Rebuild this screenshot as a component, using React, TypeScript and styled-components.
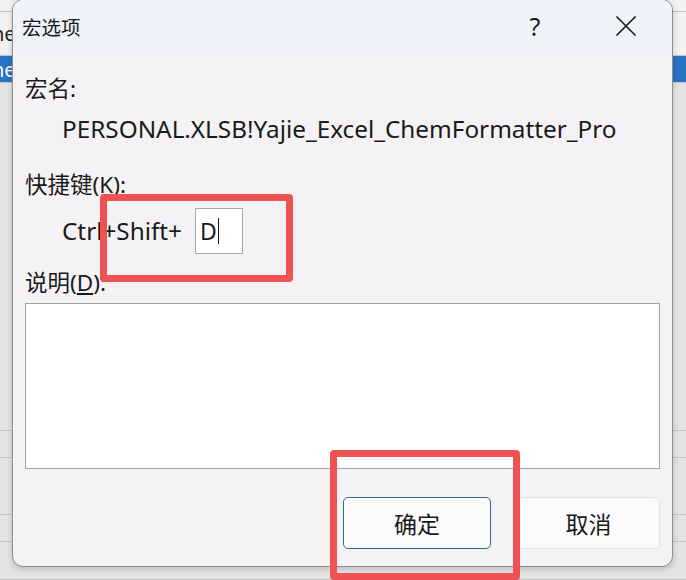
import React from 'react'
import styled, {createGlobalStyle} from 'styled-components'

const GlobalStyle = createGlobalStyle`
  html, body {
    margin: 0;
    padding: 0;
    background: #e4e4e4;
  }
  body {
    font-family: "Noto Sans", "Noto Sans CJK SC", sans-serif;
    color: #1a1a1a;
  }
`

const Screen = styled.div`
  position: relative;
  width: 686px;
  height: 580px;
  overflow: hidden;
  background: #e3e3e3;
`

const Sheet = styled.div`
  display: flex;
  flex-direction: column;
  width: 100%;
  height: 100%;
`

const SheetRow = styled.div<{$h: number; $tone?: 'blue' | 'light' | 'plain'}>`
  height: ${(p) => p.$h}px;
  flex: none;
  box-sizing: border-box;
  border-bottom: 1px solid #c4c4c4;
  background: ${(p) => (p.$tone === 'blue' ? '#2a72c6' : p.$tone === 'light' ? '#f2f2f2' : '#e3e3e3')};
  color: ${(p) => (p.$tone === 'blue' ? '#ffffff' : '#222')};
  font-size: 20px;
  line-height: ${(p) => p.$h}px;
  text-indent: -8px;
  white-space: nowrap;
`

const Dialog = styled.div`
  position: absolute;
  left: 12px;
  top: -1px;
  width: 661px;
  height: 568px;
  box-sizing: border-box;
  border: 1px solid #8e8e8e;
  border-radius: 11px;
  background: #f4f2f5;
  box-shadow: 0 2px 6px rgba(0, 0, 0, 0.18);
  overflow: hidden;
  display: flex;
  flex-direction: column;
`

const TitleBar = styled.div`
  height: 56px;
  flex: none;
  display: flex;
  align-items: center;
  background: linear-gradient(#eef4fa 0%, #eff3f9 70%, #f4f2f5 100%);
  padding: 0 0 4px 9px;
  box-sizing: border-box;
`

const Title = styled.div`
  flex: 1;
  font-family: "Noto Sans CJK SC", sans-serif;
  font-size: 19.5px;
`

const TitleButton = styled.div<{$w: number}>`
  width: ${(p) => p.$w}px;
  display: flex;
  justify-content: center;
  align-items: center;
  font-size: 25px;
  color: #1c1c1c;
`

const Body = styled.div`
  flex: 1;
  display: flex;
  flex-direction: column;
  padding: 18px 12px 0 12px;
`

const Label = styled.div<{$mt?: number}>`
  margin-top: ${(p) => p.$mt ?? 0}px;
  font-family: "Noto Sans", "Noto Sans CJK SC", sans-serif;
  font-size: 22.5px;
  line-height: 30px;
  height: 30px;
`

const Indented = styled.div<{$mt: number}>`
  margin-top: ${(p) => p.$mt}px;
  padding-left: 37px;
  font-size: 24.3px;
  line-height: 32px;
  display: flex;
  align-items: center;
`

const KeyBox = styled.div`
  width: 48px;
  height: 46px;
  box-sizing: border-box;
  margin-left: 13px;
  background: #ffffff;
  border: 1px solid #a9a9a9;
  display: flex;
  align-items: center;
  padding-left: 4px;
  font-size: 23px;
`

const Caret = styled.span`
  display: inline-block;
  width: 1.5px;
  height: 26px;
  background: #111;
  margin-left: 1px;
`

const Description = styled.div`
  margin-top: 5px;
  height: 166px;
  box-sizing: border-box;
  background: #ffffff;
  border: 1px solid #a3a3a3;
`

const Buttons = styled.div`
  display: flex;
  justify-content: flex-end;
  gap: 26px;
  margin-top: 28px;
`

const DlgButton = styled.div<{$primary?: boolean; $w: number}>`
  width: ${(p) => p.$w}px;
  height: 52px;
  box-sizing: border-box;
  border-radius: 5px;
  background: #fbfbfb;
  border: 1px solid ${(p) => (p.$primary ? '#2d6a8c' : '#e2e2e2')};
  display: flex;
  align-items: center;
  justify-content: center;
  font-family: "Noto Sans CJK SC", sans-serif;
  font-size: 23px;
  color: #1a1a1a;
`

const Highlight = styled.div<{$x: number; $y: number; $w: number; $h: number}>`
  position: absolute;
  left: ${(p) => p.$x}px;
  top: ${(p) => p.$y}px;
  width: ${(p) => p.$w}px;
  height: ${(p) => p.$h}px;
  box-sizing: border-box;
  border: 7px solid #ef5253;
  border-radius: 4px;
  pointer-events: none;
`

const CloseIcon = () => (
  <svg width="22" height="22" viewBox="0 0 22 22">
    <path d="M1.5 1.5 L20.5 20.5 M20.5 1.5 L1.5 20.5" stroke="#1c1c1c" strokeWidth="1.7" fill="none" />
  </svg>
)

export default function App() {
  return (
    <>
      <GlobalStyle />
      <Screen>
        <Sheet>
          <SheetRow $h={12} $tone="light" />
          <SheetRow $h={44} $tone="light">ne</SheetRow>
          <SheetRow $h={27} $tone="blue">ne</SheetRow>
          <SheetRow $h={348} />
          <SheetRow $h={27} />
          <SheetRow $h={57} />
          <SheetRow $h={27} />
          <SheetRow $h={38} />
        </Sheet>
        <Dialog>
          <TitleBar>
            <Title>宏选项</Title>
            <TitleButton $w={90}>?</TitleButton>
            <TitleButton $w={92}>
              <CloseIcon />
            </TitleButton>
          </TitleBar>
          <Body>
            <Label>宏名:</Label>
            <Indented $mt={9}>PERSONAL.XLSB!Yajie_Excel_ChemFormatter_Pro</Indented>
            <Label $mt={25}>快捷键(K):</Label>
            <Indented $mt={8}>
              Ctrl+Shift+
              <KeyBox>
                D<Caret />
              </KeyBox>
            </Indented>
            <Label $mt={14}>
              说明(<u>D</u>):
            </Label>
            <Description />
            <Buttons>
              <DlgButton $primary $w={148}>确定</DlgButton>
              <DlgButton $w={143}>取消</DlgButton>
            </Buttons>
          </Body>
        </Dialog>
        <Highlight $x={100} $y={194} $w={193} $h={88} />
        <Highlight $x={330} $y={450} $w={190} $h={130} />
      </Screen>
    </>
  )
}
